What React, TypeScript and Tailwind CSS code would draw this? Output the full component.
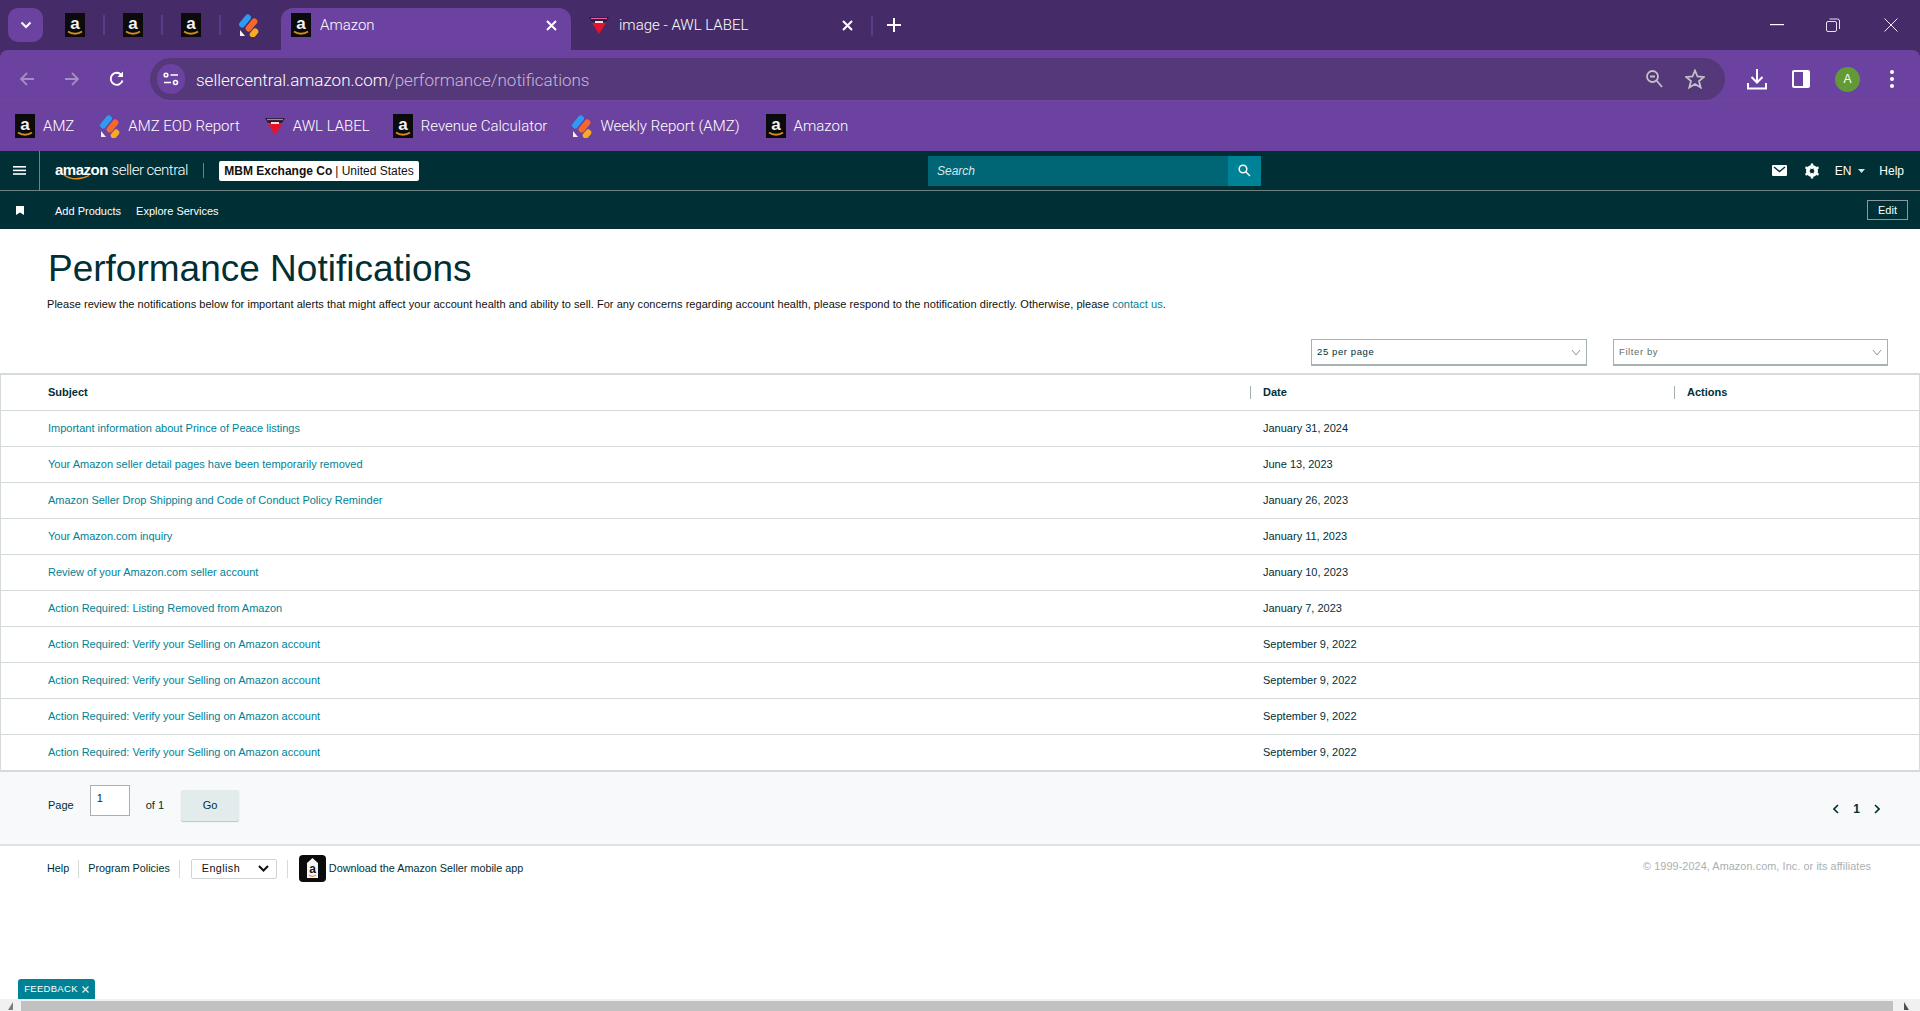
import React from "react";

const rows = [
    ["Important information about Prince of Peace listings", "January 31, 2024"],
    ["Your Amazon seller detail pages have been temporarily removed", "June 13, 2023"],
    ["Amazon Seller Drop Shipping and Code of Conduct Policy Reminder", "January 26, 2023"],
    ["Your Amazon.com inquiry", "January 11, 2023"],
    ["Review of your Amazon.com seller account", "January 10, 2023"],
    ["Action Required: Listing Removed from Amazon", "January 7, 2023"],
    ["Action Required: Verify your Selling on Amazon account", "September 9, 2022"],
    ["Action Required: Verify your Selling on Amazon account", "September 9, 2022"],
    ["Action Required: Verify your Selling on Amazon account", "September 9, 2022"],
    ["Action Required: Verify your Selling on Amazon account", "September 9, 2022"],
];

const AmazonIcon = () => (
    <svg width="20" height="24" viewBox="0 0 20 24" className="shrink-0">
        <rect width="20" height="24" fill="#0b0b0b" />
        <text x="10" y="16" textAnchor="middle" fontSize="17" fontWeight="700" fill="#f2f2f2" fontFamily="Liberation Sans, sans-serif">a</text>
        <path d="M3 18.5 C7 21.5 13 21.5 17 18.5" stroke="#d88a1d" strokeWidth="1.8" fill="none" />
    </svg>
);

const FanIcon = () => (
    <svg width="20" height="24" viewBox="0 0 20 24" className="shrink-0">
        <rect x="-1.5" y="5" width="15" height="6" rx="3" fill="#2e9bf0" transform="rotate(-50 6 8)" />
        <rect x="5" y="9" width="15" height="6" rx="3" fill="#f4682c" transform="rotate(-50 12.5 12)" />
        <rect x="10" y="17" width="10" height="6" rx="3" fill="#f9ab25" transform="rotate(-50 15 20)" />
        <path d="M1 17 L6 23 L1 23 Z" fill="#f4f4f4" />
    </svg>
);

const AwlIcon = () => (
    <svg width="20" height="20" viewBox="0 0 20 20" className="shrink-0">
        <path d="M0 2 H20 L17 7 H3 Z" fill="#2a1c33" />
        <path d="M2 3.5 H18" stroke="#e85cab" strokeWidth="1.2" />
        <path d="M3 8 H17 L10 19 Z" fill="#e4122a" />
        <rect x="6" y="6" width="8" height="2" fill="#e8e0e0" />
    </svg>
);

const Bookmark = ({ icon, label, className }: { icon: React.ReactNode; label: string; className: string }) => (
    <div className={`flex items-center gap-2 ${className}`}>
        {icon}
        <span className="text-[15px] text-white whitespace-nowrap">{label}</span>
    </div>
);

const Chevron = () => (
    <svg width="10" height="7" viewBox="0 0 10 7" fill="none" stroke="#8a9494" strokeWidth="1">
        <path d="M1 1 L5 6 L9 1" />
    </svg>
);

const App = () => {
    return (
        <div className="w-[1920px] h-[1011px] overflow-hidden relative flex flex-col bg-white font-['Liberation_Sans',Arial,sans-serif] text-[#002f36]">
            {/* tab strip */}
            <div className="bg-[#452c68] shrink-0">
                <div className="h-[50px] flex items-end font-['Roboto',sans-serif] text-white">
                    <div className="h-[34px] w-[35px] ml-2 mb-2 rounded-[10px] bg-[#6c42a0] flex items-center justify-center">
                        <svg width="12" height="8" viewBox="0 0 12 8" fill="none" stroke="#fff" strokeWidth="2"><path d="M1.5 1.5 L6 6 L10.5 1.5" /></svg>
                    </div>
                    <div className="h-[42px] flex items-start pt-[5px] ml-[22px]">
                        <AmazonIcon />
                        <div className="w-[2px] h-5 bg-[#5c3a90] mt-[2px] mx-[18px]" />
                        <AmazonIcon />
                        <div className="w-[2px] h-5 bg-[#5c3a90] mt-[2px] mx-[18px]" />
                        <AmazonIcon />
                        <div className="w-[2px] h-5 bg-[#5c3a90] mt-[2px] mx-[18px]" />
                        <FanIcon />
                    </div>
                    <div className="h-[42px] w-[290px] ml-[22px] bg-[#6c42a0] rounded-t-[12px] flex items-center pl-[10px] pr-[14px] pb-[8px]">
                        <AmazonIcon />
                        <span className="ml-[9px] text-[15px] font-light flex-1">Amazon</span>
                        <svg width="11" height="11" viewBox="0 0 11 11" stroke="#fff" strokeWidth="2"><path d="M1 1 L10 10 M10 1 L1 10" /></svg>
                    </div>
                    <div className="h-[42px] w-[300px] flex items-center pl-[18px] pr-[18px] pb-[8px]">
                        <AwlIcon />
                        <span className="ml-[10px] text-[15px] font-light flex-1">image - AWL LABEL</span>
                        <svg width="11" height="11" viewBox="0 0 11 11" stroke="#fff" strokeWidth="2"><path d="M1 1 L10 10 M10 1 L1 10" /></svg>
                    </div>
                    <div className="h-[42px] flex items-start pt-[7px]">
                        <div className="w-[2px] h-5 bg-[#5c3a90] mt-[1px]" />
                        <svg width="14" height="14" viewBox="0 0 14 14" stroke="#fff" strokeWidth="2" className="ml-[14px] mt-[3px]"><path d="M7 0 V14 M0 7 H14" /></svg>
                    </div>
                    <div className="ml-auto h-[50px] flex items-center pr-[22px]">
                        <svg width="14" height="2" viewBox="0 0 14 2"><rect width="14" height="1.2" fill="#fff" /></svg>
                        <svg width="14" height="14" viewBox="0 0 14 14" fill="none" stroke="#e8e0f0" strokeWidth="1" className="ml-[42px]"><rect x="0.5" y="3.5" width="10" height="10" rx="1.5" /><path d="M3.5 1 H11.5 A2 2 0 0 1 13.5 3 V11" /></svg>
                        <svg width="14" height="14" viewBox="0 0 14 14" stroke="#f0ecf5" strokeWidth="1" className="ml-[44px]"><path d="M0.5 0.5 L13.5 13.5 M13.5 0.5 L0.5 13.5" /></svg>
                    </div>
                </div>

                {/* toolbar */}
                <div className="h-[50px] bg-[#6c42a0] flex items-end rounded-t-[8px]">
                    <div className="w-[150px] h-[42px] flex items-center shrink-0 pl-[19px] gap-[29px]">
                        <svg width="16" height="16" viewBox="0 0 16 16" fill="none" stroke="#a48cc4" strokeWidth="1.8"><path d="M15 8 H2 M8 2 L2 8 L8 14" /></svg>
                        <svg width="16" height="16" viewBox="0 0 16 16" fill="none" stroke="#a48cc4" strokeWidth="1.8"><path d="M1 8 H14 M8 2 L14 8 L8 14" /></svg>
                        <svg width="16" height="16" viewBox="0 0 16 16" fill="none" stroke="#fff" strokeWidth="1.9"><path d="M13.5 9.5 A6 6 0 1 1 12.2 3.8" /><path d="M14 0.5 V6 H8.5 Z" fill="#fff" stroke="none" /></svg>
                    </div>
                    <div className="w-[1575px] h-[42px] rounded-full bg-[#55387a] flex items-center pl-[7px] pr-[20px]">
                        <div className="w-7 h-[30px] rounded-full bg-[#6c42a0] flex items-center justify-center">
                            <svg width="16" height="14" viewBox="0 0 16 14" fill="none" stroke="#fff" strokeWidth="1.6"><circle cx="3" cy="3" r="1.8" /><path d="M7.5 3 H15 M1 10.5 H8" /><circle cx="12.5" cy="10.5" r="2" /></svg>
                        </div>
                        <div className="ml-[11px] mt-[4px] text-[17px] font-['Roboto',sans-serif] font-light whitespace-nowrap text-[#c6b9d6]">
                            <span className="text-white">sellercentral.amazon.com</span>/performance/notifications
                        </div>
                        <div className="ml-auto flex items-center gap-[22px]">
                            <svg width="18" height="20" viewBox="0 0 18 20" fill="none" stroke="#c4c0c8" strokeWidth="1.8"><circle cx="7.5" cy="7.5" r="5.5" /><path d="M5 7.5 H10 M11.5 11.5 L17 18" /></svg>
                            <svg width="20" height="20" viewBox="0 0 20 20" fill="none" stroke="#c4c0c8" strokeWidth="1.8"><path d="M10 1.5 L12.5 7.5 L19 8 L14 12 L15.7 18.5 L10 15 L4.3 18.5 L6 12 L1 8 L7.5 7.5 Z" /></svg>
                        </div>
                    </div>
                    <div className="flex-1 h-[42px] flex items-center pl-[22px] gap-[25px]">
                        <svg width="20" height="21" viewBox="0 0 20 21" fill="none" stroke="#fff" strokeWidth="2"><path d="M10 0 V13 M4.5 8 L10 13.5 L15.5 8" /><path d="M1 14 V19.5 H19 V14" /></svg>
                        <svg width="18" height="18" viewBox="0 0 18 18"><rect width="18" height="18" rx="2" fill="#fff" /><rect x="2" y="2" width="9" height="14" fill="#6c42a0" /></svg>
                        <div className="w-[25px] h-[25px] rounded-full bg-[#629a35] text-white text-[12px] flex items-center justify-center">A</div>
                        <svg width="4" height="18" viewBox="0 0 4 18" fill="#fff" className="ml-[5px]"><circle cx="2" cy="2" r="2" /><circle cx="2" cy="9" r="2" /><circle cx="2" cy="16" r="2" /></svg>
                    </div>
                </div>
            </div>

            {/* bookmarks */}
            <div className="h-[51px] bg-[#6c42a0] border-t border-[#6f479f] flex items-center font-['Roboto',sans-serif] font-light shrink-0">
                <Bookmark icon={<AmazonIcon />} label="AMZ" className="ml-[15px]" />
                <Bookmark icon={<FanIcon />} label="AMZ EOD Report" className="ml-[26px]" />
                <Bookmark icon={<AwlIcon />} label="AWL LABEL" className="ml-[25px]" />
                <Bookmark icon={<AmazonIcon />} label="Revenue Calculator" className="ml-[23px]" />
                <Bookmark icon={<FanIcon />} label="Weekly Report (AMZ)" className="ml-[25px]" />
                <Bookmark icon={<AmazonIcon />} label="Amazon" className="ml-[26px]" />
            </div>

            {/* seller central nav */}
            <div className="h-[40px] bg-[#002f36] border-b border-[#6c8285] flex items-center text-white shrink-0">
                <div className="w-[40px] h-full border-r border-[#6c8285] flex items-center justify-center">
                    <svg width="13" height="9" viewBox="0 0 13 9" fill="#fff"><rect width="13" height="1.6" /><rect y="3.6" width="13" height="1.6" /><rect y="7.2" width="13" height="1.6" /></svg>
                </div>
                <div className="relative ml-[15px] w-[134px] text-[15px] whitespace-nowrap tracking-[-0.5px] leading-none -mt-[1px]">
                    <span className="font-bold">amazon</span> <span className="font-['Roboto',sans-serif] font-light">seller central</span>
                    <svg width="28" height="7" viewBox="0 0 28 7" fill="none" stroke="#f08f1e" strokeWidth="1.4" className="absolute left-[8px] top-[12px]"><path d="M1 1 C8 6 18 6 26 1.5" /></svg>
                </div>
                <div className="w-px h-[15px] bg-[#6c8285] ml-[14px]" />
                <div className="ml-[15px] w-[200px] h-5 bg-white rounded-[2px] text-[#111] text-[12px] flex items-center justify-center whitespace-nowrap">
                    <span className="font-bold">MBM Exchange Co</span>
                    <span className="ml-[3px]">| United States</span>
                </div>
                <div className="ml-[509px] w-[333px] h-[30px] flex">
                    <div className="w-[300px] bg-[#006574] text-[12px] italic flex items-center pl-[9px] text-[#d8e8ea]">Search</div>
                    <div className="flex-1 bg-[#008296] flex items-center justify-center">
                        <svg width="13" height="13" viewBox="0 0 13 13" fill="none" stroke="#fff" strokeWidth="1.5"><circle cx="5" cy="5" r="3.8" /><path d="M8 8 L12 12" /></svg>
                    </div>
                </div>
                <div className="ml-auto flex items-center pr-[16px] text-[12px]">
                    <svg width="16" height="12" viewBox="0 0 16 12"><rect width="15" height="11" rx="1" fill="#fff" /><path d="M2 2 L7.5 6.5 L13 2" fill="none" stroke="#002f36" strokeWidth="1.4" /></svg>
                    <svg width="16" height="16" viewBox="0 0 16 16" className="ml-[16px]"><circle cx="8" cy="8" r="4.5" fill="none" stroke="#fff" strokeWidth="3" /><path d="M8 0.5 V15.5 M1.5 4.2 L14.5 11.8 M14.5 4.2 L1.5 11.8" stroke="#fff" strokeWidth="2.4" /><circle cx="8" cy="8" r="2.2" fill="#002f36" /></svg>
                    <span className="ml-[15px]">EN</span>
                    <svg width="7" height="4" viewBox="0 0 7 4" fill="#d8e0e0" className="ml-[7px]"><path d="M0 0 H7 L3.5 4 Z" /></svg>
                    <span className="ml-[14px]">Help</span>
                </div>
            </div>
            <div className="h-[38px] bg-[#002f36] flex items-center text-white text-[11px] pr-[12px] shrink-0">
                <svg width="8" height="9" viewBox="0 0 8 9" fill="#fff" className="ml-[16px]"><path d="M0 0 H8 V9 L4 6.5 L0 9 Z" /></svg>
                <span className="ml-[31px] mt-[2px]">Add Products</span>
                <span className="ml-[15px] mt-[2px]">Explore Services</span>
                <div className="ml-auto w-[41px] h-5 border border-[#8a9a9c] flex items-center justify-center">Edit</div>
            </div>

            {/* page head */}
            <h1 className="pl-[48px] pt-[19px] text-[37px] leading-[42px] font-normal shrink-0">Performance Notifications</h1>
            <p className="pl-[47px] mt-[7px] text-[11px] leading-[14px] tracking-[0.04px] text-[#0f1111] shrink-0">
                Please review the notifications below for important alerts that might affect your account health and ability to sell. For any concerns regarding account health, please respond to the notification directly. Otherwise, please <span className="text-[#008296]">contact us</span>.
            </p>

            <div className="flex justify-end gap-[26px] pr-[32px] mt-[28px] shrink-0">
                <div className="w-[276px] h-[27px] border border-[#a6b2b2] border-b-2 flex items-center justify-between pl-[5px] pr-[5px] text-[9.5px] tracking-[0.6px]">
                    25 per page <Chevron />
                </div>
                <div className="w-[275px] h-[27px] border border-[#a6b2b2] border-b-2 flex items-center justify-between pl-[5px] pr-[5px] text-[9.5px] tracking-[0.6px] text-[#5b6b6e]">
                    Filter by <Chevron />
                </div>
            </div>

            {/* table */}
            <div className="mt-[7px] border border-[#d5dbdb] border-t-2 border-b-2 text-[11px] shrink-0">
                <div className="h-[35px] grid grid-cols-[1249px_424px_1fr] items-center font-bold">
                    <div className="pl-[47px]">Subject</div>
                    <div className="pl-[12px] border-l border-[#a6b2b2] h-[13px] leading-[13px]">Date</div>
                    <div className="pl-[12px] border-l border-[#a6b2b2] h-[13px] leading-[13px]">Actions</div>
                </div>
                {rows.map((row, i) => (
                    <div key={i} className="h-[36px] grid grid-cols-[1249px_424px_1fr] items-center border-t border-[#d5dbdb]">
                        <div className="pl-[47px] text-[#008296]">{row[0]}</div>
                        <div className="pl-[13px]">{row[1]}</div>
                        <div />
                    </div>
                ))}
            </div>

            {/* pagination */}
            <div className="h-[74px] bg-[#f7f9fa] border-b-2 border-[#dfe3e6] flex items-center pl-[48px] pr-[40px] pb-[5px] text-[11px] shrink-0">
                <span>Page</span>
                <div className="ml-[16px] w-[40px] h-[31px] -mt-[10px] bg-white border border-[#a6b2b2] pl-[6px] pt-[4px]">1</div>
                <span className="ml-[16px]">of 1</span>
                <div className="ml-[17px] w-[58px] h-[31px] bg-[#e3ecec] rounded-[2px] shadow-[0_1px_1px_#bcc4c4] flex items-center justify-center">Go</div>
                <div className="ml-auto flex items-center gap-[14px] font-bold text-[12px] mt-[7px]">
                    <svg width="6" height="10" viewBox="0 0 6 10" fill="none" stroke="#002f36" strokeWidth="1.6"><path d="M5 1 L1 5 L5 9" /></svg>
                    <span>1</span>
                    <svg width="6" height="10" viewBox="0 0 6 10" fill="none" stroke="#002f36" strokeWidth="1.6"><path d="M1 1 L5 5 L1 9" /></svg>
                </div>
            </div>

            {/* footer */}
            <div className="flex-1 flex items-start pl-[47px] pr-[49px] pt-[9px] text-[10.8px] relative">
                <div className="h-[27px] flex items-center">
                    <span>Help</span>
                    <div className="w-px h-[18px] bg-[#d5dbdb] mx-[9px]" />
                    <span>Program Policies</span>
                    <div className="w-px h-[18px] bg-[#d5dbdb] ml-[9px] mr-[11px]" />
                    <div className="w-[86px] h-[20px] border border-[#cfd5d5] rounded-[2px] flex items-center justify-between pl-[10px] pr-[7px] text-[#111] tracking-[0.4px]">
                        English
                        <svg width="11" height="7" viewBox="0 0 11 7" fill="none" stroke="#111" strokeWidth="2"><path d="M1 1 L5.5 5.5 L10 1" /></svg>
                    </div>
                    <div className="w-px h-[18px] bg-[#d5dbdb] ml-[10px] mr-[11px]" />
                    <svg width="27" height="27" viewBox="0 0 27 27">
                        <rect width="27" height="27" rx="4" fill="#0b0b0b" />
                        <path d="M8 8 L13.5 3 L19 8 V23 H8 Z" fill="#f4f4f4" />
                        <text x="13.5" y="18" textAnchor="middle" fontSize="12" fontWeight="700" fill="#111" fontFamily="Liberation Sans, sans-serif">a</text>
                        <path d="M10 20 C12 21.5 15 21.5 17 20" stroke="#e89a2d" strokeWidth="1.2" fill="none" />
                    </svg>
                    <span className="ml-[3px]">Download the Amazon Seller mobile app</span>
                </div>
                <span className="ml-auto text-[#aab0b0] mt-[3px] tracking-[0.1px]">© 1999-2024, Amazon.com, Inc. or its affiliates</span>
            </div>

            {/* horizontal scrollbar */}
            <div className="h-[12px] bg-[#f1f1f1] flex items-end shrink-0">
                <div className="w-[21px] h-[10px] flex items-center justify-center">
                    <svg width="5" height="8" viewBox="0 0 5 8" fill="#7c7c7c"><path d="M5 0 V8 H0 Z" /></svg>
                </div>
                <div className="w-[1872px] h-[10px] bg-[#c1c1c1]" />
                <div className="flex-1 h-[10px] flex items-center justify-center">
                    <svg width="5" height="8" viewBox="0 0 5 8" fill="#505050"><path d="M0 0 V8 H5 Z" /></svg>
                </div>
            </div>

            {/* feedback tab */}
            <div className="absolute left-[18px] bottom-[12px] w-[77px] h-[20px] bg-[#008296] rounded-t-[3px] text-white text-[9.5px] tracking-[0.3px] flex items-center justify-center gap-[4px]">
                FEEDBACK
                <svg width="7" height="7" viewBox="0 0 7 7" stroke="#e8f2f4" strokeWidth="1.2"><path d="M0.5 0.5 L6.5 6.5 M6.5 0.5 L0.5 6.5" /></svg>
            </div>
        </div>
    );
};

export default App;
